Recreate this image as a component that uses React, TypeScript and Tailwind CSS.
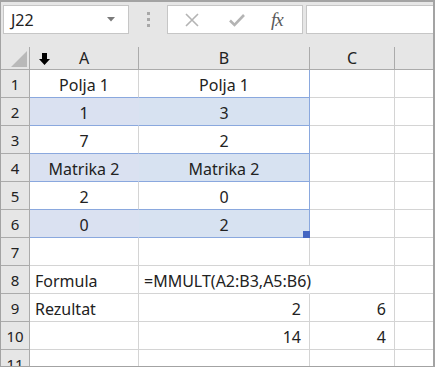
import React from "react"

type Cell = {
    text?: string
    align?: "left" | "center" | "right"
}

const ROWS: Array<Array<Cell>> = [
    [{ text: "Polja 1", align: "center" }, { text: "Polja 1", align: "center" }, {}],
    [{ text: "1", align: "center" }, { text: "3", align: "center" }, {}],
    [{ text: "7", align: "center" }, { text: "2", align: "center" }, {}],
    [{ text: "Matrika 2", align: "center" }, { text: "Matrika 2", align: "center" }, {}],
    [{ text: "2", align: "center" }, { text: "0", align: "center" }, {}],
    [{ text: "0", align: "center" }, { text: "2", align: "center" }, {}],
    [{}, {}, {}],
    [{ text: "Formula", align: "left" }, { text: "=MMULT(A2:B3,A5:B6)", align: "left" }, {}],
    [{ text: "Rezultat", align: "left" }, { text: "2", align: "right" }, { text: "6", align: "right" }],
    [{}, { text: "14", align: "right" }, { text: "4", align: "right" }],
    [{}, {}, {}],
]

const SHADED = [2, 4, 6]

function alignClass(a?: string) {
    if (a === "center") return "justify-center"
    if (a === "right") return "justify-end pr-[8px]"
    return "justify-start pl-[5px]"
}

export default function App() {
    return (
        <div
            className="w-[435px] h-[367px] overflow-hidden border-t-2 border-l border-r-2 border-b border-[#a3a3a3] bg-white text-[#222]"
            style={{ fontFamily: '"Noto Sans", "Open Sans", sans-serif' }}
        >
            {/* toolbar */}
            <div className="h-[45px] bg-[#e6e6e6] flex items-start pt-[3px] pl-[2px]">
                <div className="w-[126px] h-[29px] bg-white border border-[#c6c6c6] flex items-center justify-between pl-[7px] pr-[13px]">
                    <span className="text-[16px] leading-none">J22</span>
                    <svg width="8" height="5" viewBox="0 0 8 5">
                        <path d="M0 0 H8 L4 4.5 Z" fill="#7a7a7a" />
                    </svg>
                </div>
                <div className="w-[38px] h-[29px] flex flex-col items-center justify-center gap-[3px]">
                    <div className="w-[3px] h-[3px] bg-[#a8a8a8]" />
                    <div className="w-[3px] h-[3px] bg-[#a8a8a8]" />
                    <div className="w-[3px] h-[3px] bg-[#a8a8a8]" />
                </div>
                <div className="w-[136px] h-[29px] bg-white border border-[#c6c6c6] flex items-center pl-[17px]">
                    <svg width="14" height="14" viewBox="0 0 14 14">
                        <path d="M1 1 L13 13 M13 1 L1 13" stroke="#b4b4b4" strokeWidth="1.6" />
                    </svg>
                    <svg width="16" height="14" viewBox="0 0 16 14" className="ml-[30px]">
                        <path d="M1 7.5 L5.5 12 L15 2" stroke="#b4b4b4" strokeWidth="2.6" fill="none" />
                    </svg>
                    <span
                        className="ml-[26px] text-[19px] italic leading-none text-[#5a5a5a] tracking-[-1px]"
                        style={{ fontFamily: '"Liberation Serif", serif' }}
                    >
                        fx
                    </span>
                </div>
                <div className="ml-[3px] flex-1 h-[29px] bg-white border border-[#c6c6c6] border-r-0" />
            </div>

            {/* grid */}
            <div className="grid grid-cols-[29px_109px_171px_85px_1fr] grid-rows-[23px] auto-rows-[28px]">
                {/* header row */}
                <div className="bg-[#e6e6e6] border-r border-b border-[#ababab] flex items-end justify-end pr-[2px] pb-[2px]">
                    <svg width="16" height="16" viewBox="0 0 16 16">
                        <path d="M16 0 V16 H0 Z" fill="#b9b9b9" />
                    </svg>
                </div>
                <div className="bg-[#e6e6e6] border-r border-b border-[#ababab] relative flex items-center justify-center">
                    <svg width="11" height="12" viewBox="0 0 11 12" className="absolute left-[9px] top-[6px]">
                        <path d="M3 0 H8 V6 H11 L5.5 12 L0 6 H3 Z" fill="#000" />
                    </svg>
                    <span className="text-[16px] leading-none">A</span>
                </div>
                <div className="bg-[#e6e6e6] border-r border-b border-[#ababab] flex items-center justify-center">
                    <span className="text-[16px] leading-none">B</span>
                </div>
                <div className="bg-[#e6e6e6] border-r border-b border-[#ababab] flex items-center justify-center">
                    <span className="text-[16px] leading-none">C</span>
                </div>
                <div className="bg-[#e6e6e6] border-b border-[#ababab]" />

                {ROWS.map((row, i) => {
                    const n = i + 1
                    const inSel = n <= 6
                    const shaded = SHADED.includes(n)
                    return (
                        <React.Fragment key={n}>
                            <div className="bg-[#e6e6e6] border-r border-b border-[#ababab] flex items-center justify-center text-[15px] pt-[1px]">
                                {n}
                            </div>
                            <div
                                className={`relative flex items-center whitespace-nowrap text-[16px] pt-[2px] border-b border-r ${alignClass(row[0].align)} ${
                                    shaded ? "bg-[#dae1f1] border-r-[#dae1f1]" : "bg-white border-r-[#d4d4d4]"
                                } ${inSel ? "border-b-[#8aa8de]" : "border-b-[#d4d4d4]"}`}
                            >
                                {row[0].text}
                            </div>
                            <div
                                className={`relative z-10 flex items-center whitespace-nowrap text-[16px] pt-[2px] border-b border-r ${alignClass(row[1].align)} ${
                                    shaded ? "bg-[#d7e2f1]" : n === 8 ? "bg-transparent" : "bg-white"
                                } ${inSel ? "border-b-[#8aa8de] border-r-[#8aa8de]" : n === 8 ? "border-b-[#d4d4d4] border-r-transparent" : "border-b-[#d4d4d4] border-r-[#d4d4d4]"}`}
                            >
                                {row[1].text}
                                {n === 6 && (
                                    <div className="absolute right-[-1px] bottom-[-1px] w-[7px] h-[7px] bg-[#4466c2]" />
                                )}
                            </div>
                            <div
                                className={`flex items-center text-[16px] pt-[2px] border-b border-r border-[#d4d4d4] ${alignClass(row[2].align)}`}
                            >
                                {row[2].text}
                            </div>
                            <div className="border-b border-[#d4d4d4]" />
                        </React.Fragment>
                    )
                })}
            </div>
        </div>
    )
}
